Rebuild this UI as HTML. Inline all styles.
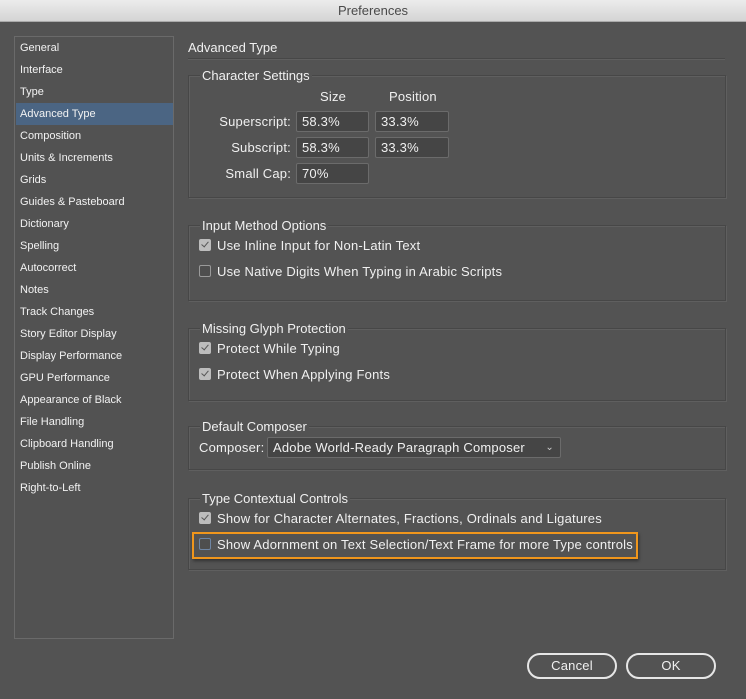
<!DOCTYPE html>
<html><head><style>
*{margin:0;padding:0;box-sizing:border-box}
body{width:746px;height:699px;background:#535353;font-family:"Liberation Sans",sans-serif;font-size:13px;letter-spacing:0.2px;color:#f0f0f0;position:relative;overflow:hidden}
.a{position:absolute;white-space:nowrap}
.r{position:absolute;white-space:nowrap;text-align:right}
#tb{left:0;top:0;width:746px;height:22px;background:linear-gradient(#ececec,#d4d4d4);border-bottom:1px solid #aaa;color:#4a4a4a;font-size:13px;letter-spacing:0;text-align:center;line-height:22px}
#side{left:14px;top:36px;width:160px;height:603px;border:1px solid #6a6a6a;background:#525252}
.si{position:absolute;left:5px;font-size:11px;letter-spacing:0;color:#f2f2f2;top:0}
#sel{position:absolute;left:1px;top:66px;width:157px;height:22px;background:#4b6583}
.box{position:absolute;border:1px solid #474747;box-shadow:inset 1px 1px 0 #5f5f5f,1px 1px 0 #5f5f5f}
.lg{position:absolute;background:#535353;padding:0 2px;font-size:13px;letter-spacing:0;white-space:nowrap}
.inp{position:absolute;height:21px;background:#454545;border:1px solid #6b6b6b;border-radius:2px;padding-left:5px;line-height:19px;font-size:13px;white-space:nowrap}
.cb{position:absolute;width:12px;height:12px;border:1px solid #9a9a9a;border-radius:2px;background:#4e4e4e}
.cb.on{background:#bdbdbd;border-color:#bdbdbd}
.cb.on::after{content:"";position:absolute;left:3px;top:0px;width:3px;height:6px;border:solid #555;border-width:0 1.5px 1.5px 0;transform:rotate(40deg)}
.btn{position:absolute;height:26px;border:2px solid #e6e6e6;border-radius:13px;text-align:center;line-height:22px;font-size:13px}
</style></head><body>
<div class="a" id="tb">Preferences</div>
<div class="a" id="side">
<div id="sel"></div>
<div class="si" style="top:5px">General</div>
<div class="si" style="top:27px">Interface</div>
<div class="si" style="top:49px">Type</div>
<div class="si" style="top:71px">Advanced Type</div>
<div class="si" style="top:93px">Composition</div>
<div class="si" style="top:115px">Units &amp; Increments</div>
<div class="si" style="top:137px">Grids</div>
<div class="si" style="top:159px">Guides &amp; Pasteboard</div>
<div class="si" style="top:181px">Dictionary</div>
<div class="si" style="top:203px">Spelling</div>
<div class="si" style="top:225px">Autocorrect</div>
<div class="si" style="top:247px">Notes</div>
<div class="si" style="top:269px">Track Changes</div>
<div class="si" style="top:291px">Story Editor Display</div>
<div class="si" style="top:313px">Display Performance</div>
<div class="si" style="top:335px">GPU Performance</div>
<div class="si" style="top:357px">Appearance of Black</div>
<div class="si" style="top:379px">File Handling</div>
<div class="si" style="top:401px">Clipboard Handling</div>
<div class="si" style="top:423px">Publish Online</div>
<div class="si" style="top:445px">Right-to-Left</div>
</div>

<div class="a" style="left:188px;top:40px;font-size:13px;letter-spacing:0">Advanced Type</div>
<div class="a" style="left:188px;top:58px;width:537px;height:1px;background:#474747;box-shadow:0 1px 0 #5f5f5f"></div>

<div class="box" style="left:188px;top:75px;width:538px;height:123px"></div>
<div class="lg" style="left:200px;top:68px">Character Settings</div>
<div class="a" style="left:320px;top:89px">Size</div>
<div class="a" style="left:389px;top:89px">Position</div>
<div class="r" style="left:190px;width:101px;top:114px">Superscript:</div>
<div class="inp" style="left:296px;top:111px;width:73px">58.3%</div>
<div class="inp" style="left:375px;top:111px;width:74px">33.3%</div>
<div class="r" style="left:190px;width:101px;top:140px">Subscript:</div>
<div class="inp" style="left:296px;top:137px;width:73px">58.3%</div>
<div class="inp" style="left:375px;top:137px;width:74px">33.3%</div>
<div class="r" style="left:190px;width:101px;top:166px">Small Cap:</div>
<div class="inp" style="left:296px;top:163px;width:73px">70%</div>

<div class="box" style="left:188px;top:225px;width:538px;height:76px"></div>
<div class="lg" style="left:200px;top:218px">Input Method Options</div>
<div class="cb on" style="left:199px;top:239px"></div>
<div class="a" style="left:217px;top:238px">Use Inline Input for Non-Latin Text</div>
<div class="cb" style="left:199px;top:265px"></div>
<div class="a" style="left:217px;top:264px">Use Native Digits When Typing in Arabic Scripts</div>

<div class="box" style="left:188px;top:328px;width:538px;height:73px"></div>
<div class="lg" style="left:200px;top:321px">Missing Glyph Protection</div>
<div class="cb on" style="left:199px;top:342px"></div>
<div class="a" style="left:217px;top:341px">Protect While Typing</div>
<div class="cb on" style="left:199px;top:368px"></div>
<div class="a" style="left:217px;top:367px">Protect When Applying Fonts</div>

<div class="box" style="left:188px;top:426px;width:538px;height:44px"></div>
<div class="lg" style="left:200px;top:419px">Default Composer</div>
<div class="a" style="left:199px;top:440px">Composer:</div>
<div class="inp" style="left:267px;top:437px;width:294px;line-height:19px">Adobe World-Ready Paragraph Composer<span style="position:absolute;right:6px;top:0;font-size:10px;color:#ccc">&#8964;</span></div>

<div class="box" style="left:188px;top:498px;width:538px;height:72px"></div>
<div class="lg" style="left:200px;top:491px">Type Contextual Controls</div>
<div class="cb on" style="left:199px;top:512px"></div>
<div class="a" style="left:217px;top:511px">Show for Character Alternates, Fractions, Ordinals and Ligatures</div>
<div class="a" style="left:192px;top:532px;width:446px;height:27px;border:2px solid #f0961c;box-shadow:1px 2px 3px rgba(0,0,0,.4)"></div>
<div class="cb" style="left:199px;top:538px;border-color:#6f86a4"></div>
<div class="a" style="left:217px;top:537px">Show Adornment on Text Selection/Text Frame for more Type controls</div>

<div class="btn" style="left:527px;top:653px;width:90px">Cancel</div>
<div class="btn" style="left:626px;top:653px;width:90px">OK</div>
</body></html>
